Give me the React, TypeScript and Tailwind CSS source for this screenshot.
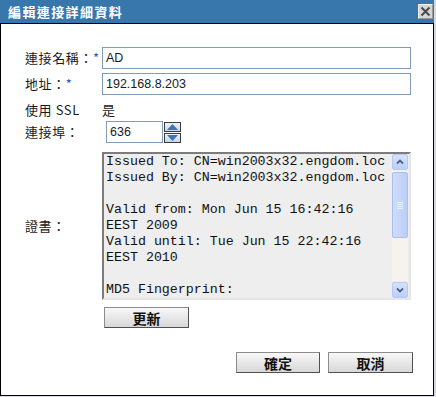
import React from "react";

const lines = [
  "Issued To: CN=win2003x32.engdom.loc",
  "Issued By: CN=win2003x32.engdom.loc",
  "",
  "Valid from: Mon Jun 15 16:42:16",
  "EEST 2009",
  "Valid until: Tue Jun 15 22:42:16",
  "EEST 2010",
  "",
  "MD5 Fingerprint:",
];

function Btn({ label, w }: { label: string; w: string }) {
  return (
    <div
      className={`${w} h-[21px] border border-[#8c8c8c] border-b-[#505050] border-r-[#505050] bg-gradient-to-b from-[#f8f8f8] to-[#d8d8d8] flex items-center justify-center text-[14px] font-bold text-[#111] leading-none`}
    >
      {label}
    </div>
  );
}

export default function App() {
  return (
    <div className="w-[436px] h-[397px] bg-[#d7dbe1] font-['Liberation_Sans','Noto_Sans_CJK_TC',sans-serif]">
      <div className="w-[434px] h-[396px] flex flex-col">
        <div className="h-[23px] bg-[#3777ac] flex items-center justify-between pl-[8px] pr-[1px]">
          <span className="text-white font-bold text-[13px] tracking-[1.4px] leading-none font-['Noto_Sans_CJK_TC',sans-serif]">
            編輯連接詳細資料
          </span>
          <div className="w-[15px] h-[15px] bg-[#d6d6d6] border border-[#f2f2f2] border-b-[#9a9a9a] border-r-[#9a9a9a] flex items-center justify-center">
            <svg width="11" height="11" viewBox="0 0 11 11">
              <path d="M1.5 1.5 L9.5 9.5 M9.5 1.5 L1.5 9.5" stroke="#4a4a4a" strokeWidth="2" />
            </svg>
          </div>
        </div>
        <div className="h-[373px] border border-black bg-white pl-[24px] pt-[23px] flex flex-col text-[13px] text-[#1a1a1a] font-['Noto_Sans_CJK_TC',sans-serif]">
          <div className="flex h-[22px] items-center">
            <div className="w-[77px] whitespace-nowrap tracking-[0.6px]">
              連接名稱：<span className="text-[#2a5db0]">*</span>
            </div>
            <div className="w-[309px] h-[22px] border border-[#7f9db9] pl-[3px] flex items-center text-[12.5px] font-['Liberation_Sans',sans-serif]">
              AD
            </div>
          </div>
          <div className="flex h-[22px] items-center mt-[4px]">
            <div className="w-[77px] whitespace-nowrap tracking-[0.6px]">
              地址：<span className="text-[#2a5db0]">*</span>
            </div>
            <div className="w-[309px] h-[22px] border border-[#7f9db9] pl-[3px] flex items-center text-[12.5px] font-['Liberation_Sans',sans-serif]">
              192.168.8.203
            </div>
          </div>
          <div className="flex h-[20px] items-center mt-[5px]">
            <div className="w-[77px] whitespace-nowrap tracking-[0.6px]">使用 SSL</div>
            <div>是</div>
          </div>
          <div className="flex h-[22px] items-center mt-[1px]">
            <div className="w-[81px] whitespace-nowrap tracking-[0.6px]">連接埠：</div>
            <div className="w-[57px] h-[22px] border border-[#7f9db9] pl-[3px] flex items-center text-[12.5px] font-['Liberation_Sans',sans-serif]">
              636
            </div>
            <div className="ml-[1px] w-[17px] flex flex-col gap-[1px]">
              <div className="h-[10px] border border-[#3c3c3c] bg-gradient-to-b from-[#eef2f8] to-[#c9d4e4] flex items-center justify-center">
                <svg width="11" height="6" viewBox="0 0 11 6">
                  <path d="M0 6 L5.5 0 L11 6 Z" fill="#3c74b6" />
                </svg>
              </div>
              <div className="h-[10px] border border-[#3c3c3c] bg-gradient-to-b from-[#eef2f8] to-[#c9d4e4] flex items-center justify-center">
                <svg width="11" height="6" viewBox="0 0 11 6">
                  <path d="M0 0 L5.5 6 L11 0 Z" fill="#3c74b6" />
                </svg>
              </div>
            </div>
          </div>
          <div className="flex items-center mt-[9px]">
            <div className="w-[77px] whitespace-nowrap tracking-[0.6px]">證書：</div>
            <div className="w-[309px] h-[148px] border-2 border-t-[#7c7c7c] border-l-[#7c7c7c] border-r-[#e6e6e6] border-b-[#e6e6e6] bg-[#eeeeee] flex">
              <div className="flex-1 pl-[2px] overflow-hidden font-['Liberation_Mono',monospace] text-[13.3px] text-[#111]">
                {lines.map((l, i) => (
                  <div key={i} className="h-[16px] leading-[16px] whitespace-pre">
                    {l}
                  </div>
                ))}
              </div>
              <div className="w-[16px] mr-[1px] flex flex-col bg-[#f4f3ee]">
                <div className="h-[16px] rounded-[2px] border border-[#b4c8f3] bg-gradient-to-b from-[#d6e2fd] to-[#bccff9] flex items-center justify-center">
                  <svg width="8" height="6" viewBox="0 0 8 6">
                    <path d="M1 4.5 L4 1.5 L7 4.5" stroke="#4d6185" strokeWidth="1.8" fill="none" />
                  </svg>
                </div>
                <div className="flex-1 flex flex-col">
                  <div className="mt-[2px] h-[66px] rounded-[2px] border border-[#a9bff0] bg-gradient-to-r from-[#cfdcfb] to-[#bccef8] flex flex-col items-center justify-center gap-[1px]">
                    <div className="w-[6px] h-[1px] bg-[#eef3ff]" />
                    <div className="w-[6px] h-[1px] bg-[#eef3ff]" />
                    <div className="w-[6px] h-[1px] bg-[#eef3ff]" />
                    <div className="w-[6px] h-[1px] bg-[#eef3ff]" />
                  </div>
                </div>
                <div className="h-[16px] rounded-[2px] border border-[#b4c8f3] bg-gradient-to-b from-[#d6e2fd] to-[#bccff9] flex items-center justify-center">
                  <svg width="8" height="6" viewBox="0 0 8 6">
                    <path d="M1 1.5 L4 4.5 L7 1.5" stroke="#4d6185" strokeWidth="1.8" fill="none" />
                  </svg>
                </div>
              </div>
            </div>
          </div>
          <div className="flex mt-[7px] ml-[79px]">
            <Btn label="更新" w="w-[85px]" />
          </div>
          <div className="flex mt-[24px] ml-[211px] gap-[8px]">
            <Btn label="確定" w="w-[84px]" />
            <Btn label="取消" w="w-[85px]" />
          </div>
        </div>
      </div>
    </div>
  );
}
